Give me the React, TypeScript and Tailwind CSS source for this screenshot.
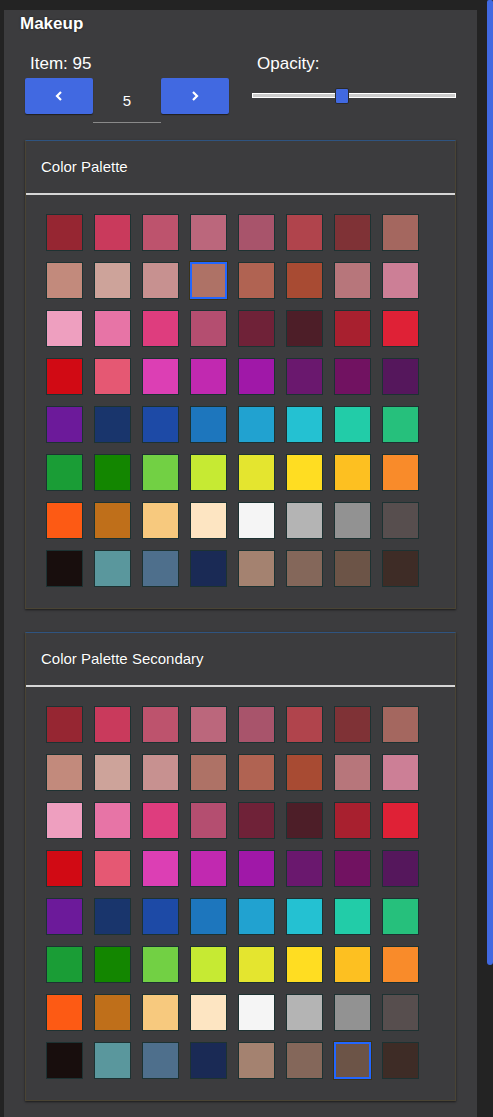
import { useState } from "react";

const colores = [
  "#962632", "#c93a5c", "#bd536d", "#bb677c", "#a8546b", "#b0444c", "#7f3236", "#a4675f",
  "#c28a7c", "#cda39a", "#c79190", "#ae7266", "#b06352", "#a84b33", "#b7767b", "#cc7f96",
  "#ee9fbf", "#e774a6", "#de3d7e", "#b44e70", "#6f2238", "#4d1e28", "#a8202f", "#df2136",
  "#d10a14", "#e55873", "#dc3fb4", "#c129b0", "#a018a8", "#6a186e", "#711261", "#55175c",
  "#6c1a9a", "#19356c", "#1d4aa6", "#1d76bd", "#21a2d0", "#24c1d2", "#22cca8", "#26c07c",
  "#1a9d36", "#138600", "#72d044", "#c6ea33", "#e4e52f", "#ffdd22", "#fdc021", "#f98b2a",
  "#fd5a14", "#bf6f1a", "#f7c97e", "#fde5c2", "#f5f5f5", "#b4b4b4", "#929292", "#574e4e",
  "#180e0d", "#5a979d", "#4e6f8c", "#1a2a55", "#a48270", "#84675a", "#6c5447", "#3e2c26",
];

function Paleta({ titulo, inicial }: { titulo: string; inicial: number }) {
  const [sel, setSel] = useState(inicial);
  return (
    <div className="border border-[#4a4434] border-t-[#2f5480] bg-[#3c3c3e] shadow-[0_1px_2px_rgba(0,0,0,0.55)]">
      <div className="h-[52px] flex items-center pl-[15px] text-[15px] text-white [text-shadow:0_0_1px_rgba(0,0,0,0.6)]">
        {titulo}
      </div>
      <div className="h-[2px] bg-[#d6d6d6]" />
      <div className="pt-[19px] pb-[21px] pl-[20px] grid grid-cols-[repeat(8,37px)] gap-[11px]">
        {colores.map((c, i) => (
          <button
            key={i}
            onClick={() => setSel(i)}
            style={{ backgroundColor: c }}
            className={`w-[37px] h-[37px] ${
              sel === i
                ? "border-2 border-[#2266ff] shadow-[0_0_0_1px_#3b3318]"
                : "border border-[#1d3232]"
            }`}
          />
        ))}
      </div>
    </div>
  );
}

export default function App() {
  const [item, setItem] = useState(95);
  const [opacidad, setOpacidad] = useState(0.437);

  return (
    <div className="min-h-[1117px] bg-[#232323] flex font-['Liberation_Sans',Arial,sans-serif] text-white">
      <div className="ml-[4px] mt-[10px] w-[473px] bg-[#3c3c3e] px-[21px]">
        <div className="pt-[4px] -ml-[5px] text-[17px] font-bold leading-[20px] [text-shadow:0_0_2px_rgba(0,0,0,0.7)]">
          Makeup
        </div>

        <div className="mt-[21px] flex">
          <div className="w-[204px]">
            <div className="ml-[5px] text-[17px] leading-[18px]">Item: {item}</div>
            <div className="mt-[5px] flex items-start">
              <button
                onClick={() => setItem(item - 1)}
                className="w-[68px] h-[36px] rounded-[2px] bg-[#4169e1] flex items-center justify-center shadow-[0_1px_1px_rgba(0,0,0,0.5)]"
              >
                <svg width="8" height="10" viewBox="0 0 8 10">
                  <polyline points="6,1 2,5 6,9" fill="none" stroke="white" strokeWidth="2.2" />
                </svg>
              </button>
              <div className="w-[68px] h-[45px] pt-[15px] text-center text-[15px] leading-[16px] border-b border-[#8a8a8a]">
                5
              </div>
              <button
                onClick={() => setItem(item + 1)}
                className="w-[68px] h-[36px] rounded-[2px] bg-[#4169e1] flex items-center justify-center shadow-[0_1px_1px_rgba(0,0,0,0.5)]"
              >
                <svg width="8" height="10" viewBox="0 0 8 10">
                  <polyline points="2,1 6,5 2,9" fill="none" stroke="white" strokeWidth="2.2" />
                </svg>
              </button>
            </div>
          </div>

          <div className="ml-[23px] w-[204px]">
            <div className="ml-[5px] text-[17px] leading-[18px]">Opacity:</div>
            <div
              className="relative mt-[15px] h-[16px] cursor-pointer"
              onClick={(e) => {
                const r = e.currentTarget.getBoundingClientRect();
                setOpacidad(Math.min(1, Math.max(0, (e.clientX - r.left) / r.width)));
              }}
            >
              <div className="absolute left-0 right-0 top-[5px] h-[5px] bg-[#cccccc] border border-white" />
              <div
                className="absolute top-0 w-[14px] h-[16px] rounded-[2px] bg-[#4169e1] border border-[#2a2a2a]"
                style={{ left: `${opacidad * 190}px` }}
              />
            </div>
          </div>
        </div>

        <div className="mt-[17px] flex flex-col gap-[23px]">
          <Paleta titulo="Color Palette" inicial={11} />
          <Paleta titulo="Color Palette Secondary" inicial={62} />
        </div>
      </div>
      <div className="ml-[10px] w-[6px] h-[965px] bg-[#4169e1] rounded-b-[3px] rounded-t-[2px]" />
    </div>
  );
}
